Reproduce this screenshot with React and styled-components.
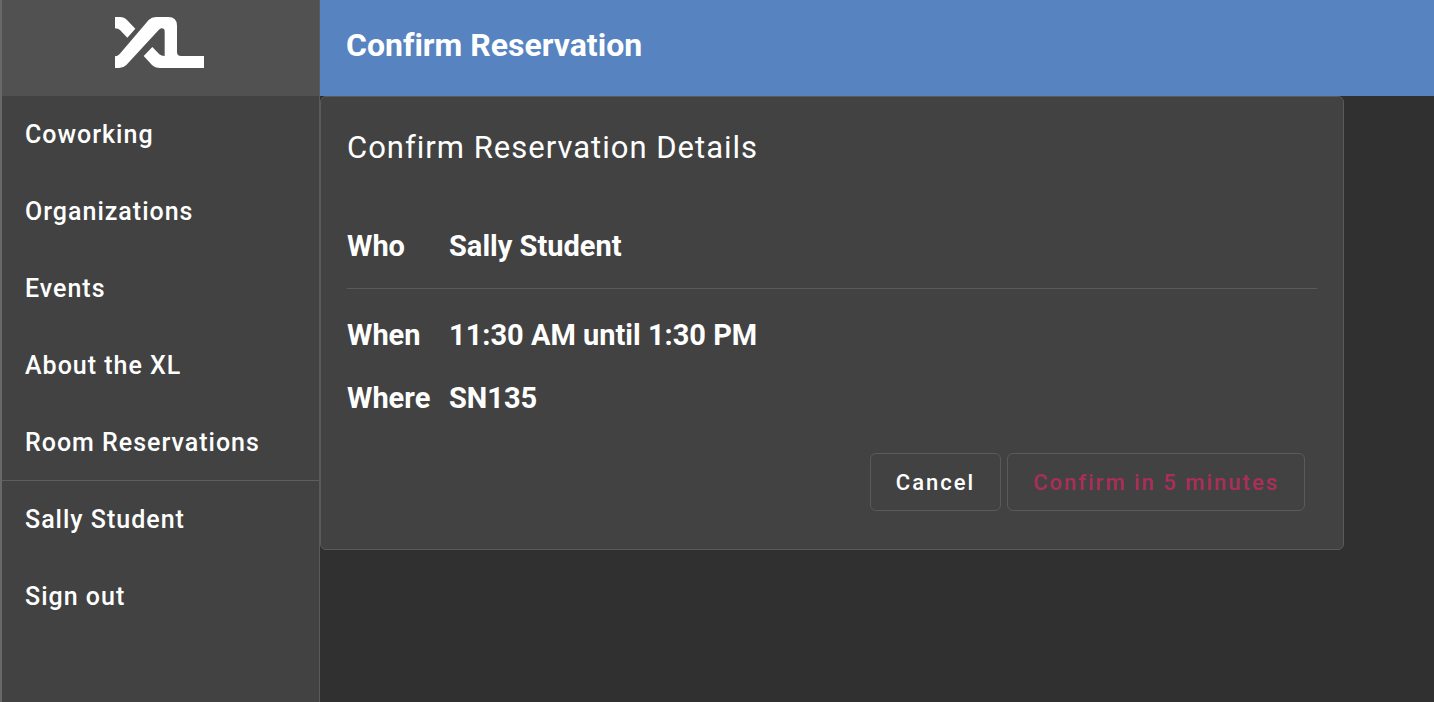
import React from "react";
import styled, { createGlobalStyle } from "styled-components";

const GlobalStyle = createGlobalStyle`
  * { box-sizing: border-box; }
  body {
    margin: 0;
    background: #303030;
    color: #fff;
    font-family: Roboto, "Liberation Sans", sans-serif;
    font-variant-ligatures: none;
  }
`;

const Shell = styled.div`
  display: flex;
  min-height: 100vh;
`;

const Sidebar = styled.aside`
  flex: 0 0 320px;
  background: #424242;
  border-left: 2px solid #686868;
  border-right: 1px solid #5a5a5a;
`;

const Brand = styled.a`
  display: flex;
  justify-content: center;
  height: 96px;
  padding: 17px 2px 0 0;
  background: #515151;
`;

const NavList = styled.ul`
  display: flex;
  flex-direction: column;
  gap: 1px;
  list-style: none;
  margin: 0;
  padding: 0;
  border-bottom: ${(p) => (p.$divided ? "1px solid #5e5e5e" : "0")};
`;

const NavLink = styled.a`
  display: flex;
  align-items: center;
  height: 76px;
  padding: 2px 23px 0;
  font-size: 25px;
  line-height: 32px;
  font-weight: 500;
  letter-spacing: 1px;
  color: #fff;
  text-decoration: none;
`;

const Main = styled.main`
  flex: 1;
  min-width: 0;
`;

const TopBar = styled.header`
  display: flex;
  height: 96px;
  padding: 25px 26px;
  background: #5784c0;
`;

const PageTitle = styled.h1`
  margin: 0;
  font-size: 32px;
  line-height: 40px;
  font-weight: 700;
`;

const Card = styled.section`
  max-width: 1024px;
  padding: 25px 26px;
  background: #424242;
  border: 1px solid #5a5a5a;
  border-radius: 6px;
`;

const CardTitle = styled.h2`
  margin: 0 0 44px;
  font-size: 31px;
  line-height: 52px;
  font-weight: 400;
  letter-spacing: 1px;
`;

const Details = styled.dl`
  margin: 0;
`;

const DetailRow = styled.div`
  display: grid;
  grid-template-columns: 102px 1fr;
  height: 63px;
  padding-top: 12px;
  font-size: 29px;
  line-height: 32px;
  font-weight: 700;
`;

const Term = styled.dt``;

const Value = styled.dd`
  margin: 0;
`;

const Divider = styled.hr`
  margin: 7px 0 18px;
  border: 0;
  border-top: 1px solid #5a5a5a;
`;

const Actions = styled.div`
  display: flex;
  justify-content: flex-end;
  gap: 6px;
  padding: 20px 12px 13px;
`;

const Button = styled.button`
  height: 58px;
  padding: 0 25px;
  background: transparent;
  border: 1px solid #5a5a5a;
  border-radius: 6px;
  color: ${(p) => (p.$accent ? "#ad2d59" : "#fff")};
  font-family: inherit;
  font-size: 22px;
  font-weight: 500;
  letter-spacing: 2px;
`;

const Logo = () => (
  <svg width="89" height="51" viewBox="45 36 267 153" fill="#fff" aria-hidden="true">
    <path d="M45 36H60Q73 36 81 45L106 71L82 98L60 75Q55 70 45 70Z" />
    <path d="M45 189V154Q53 154 59 147L146 45Q155 36 168 36H205Q231 36 231 62V141Q231 153 243 153H312V189H180Q165 189 156 180L131 153L157 126L178 148Q183 153 194 153V80Q194 70 185 70Q180 70 176 75L79 180Q70 189 57 189Z" />
  </svg>
);

const mainLinks = ["Coworking", "Organizations", "Events", "About the XL", "Room Reservations"];
const accountLinks = ["Sally Student", "Sign out"];

const Links = ({ items, divided }) => (
  <NavList $divided={divided}>
    {items.map((label) => (
      <li key={label}>
        <NavLink href="#">{label}</NavLink>
      </li>
    ))}
  </NavList>
);

const Detail = ({ term, children }) => (
  <DetailRow>
    <Term>{term}</Term>
    <Value>{children}</Value>
  </DetailRow>
);

export default function App() {
  return (
    <>
      <GlobalStyle />
      <Shell>
        <Sidebar>
          <Brand href="#" aria-label="XL home">
            <Logo />
          </Brand>
          <nav>
            <Links items={mainLinks} divided />
            <Links items={accountLinks} />
          </nav>
        </Sidebar>
        <Main>
          <TopBar>
            <PageTitle>Confirm Reservation</PageTitle>
          </TopBar>
          <Card>
            <CardTitle>Confirm Reservation Details</CardTitle>
            <Details>
              <Detail term="Who">Sally Student</Detail>
            </Details>
            <Divider />
            <Details>
              <Detail term="When">11:30 AM until 1:30 PM</Detail>
              <Detail term="Where">SN135</Detail>
            </Details>
            <Actions>
              <Button type="button">Cancel</Button>
              <Button type="button" $accent>Confirm in 5 minutes</Button>
            </Actions>
          </Card>
        </Main>
      </Shell>
    </>
  );
}
